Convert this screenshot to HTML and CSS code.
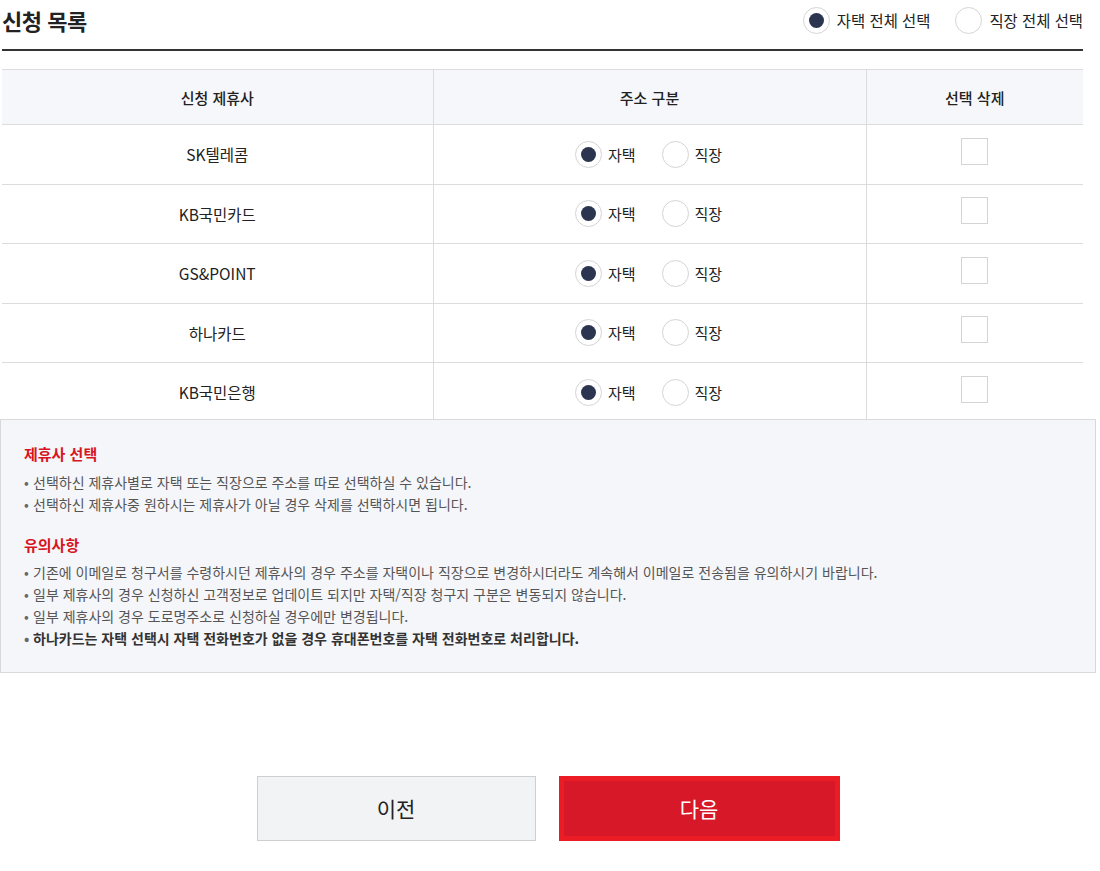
FILE: index.html
```html
<!DOCTYPE html>
<html lang="ko">
<head>
  <meta charset="UTF-8" />
  <title>신청 목록</title>
  <link rel="stylesheet" href="styles.css">
</head>
<body>
  <div class="wrap">
    <div class="list-head">
      <h2 class="title">신청 목록</h2>
      <div class="all-select">
        <label class="radio"><input type="radio" name="all" checked /><span>자택 전체 선택</span></label>
        <label class="radio"><input type="radio" name="all" /><span>직장 전체 선택</span></label>
      </div>
    </div>

    <table class="list">
      <colgroup>
        <col class="c1" />
        <col class="c2" />
        <col class="c3" />
      </colgroup>
      <thead>
        <tr>
          <th>신청 제휴사</th>
          <th>주소 구분</th>
          <th>선택 삭제</th>
        </tr>
      </thead>
      <tbody>
        <tr>
          <td>SK텔레콤</td>
          <td>
            <div class="addr">
              <label class="radio"><input type="radio" name="r1" checked /><span>자택</span></label>
              <label class="radio"><input type="radio" name="r1" /><span>직장</span></label>
            </div>
          </td>
          <td><input type="checkbox" class="check" /></td>
        </tr>
        <tr>
          <td>KB국민카드</td>
          <td>
            <div class="addr">
              <label class="radio"><input type="radio" name="r2" checked /><span>자택</span></label>
              <label class="radio"><input type="radio" name="r2" /><span>직장</span></label>
            </div>
          </td>
          <td><input type="checkbox" class="check" /></td>
        </tr>
        <tr>
          <td>GS&amp;POINT</td>
          <td>
            <div class="addr">
              <label class="radio"><input type="radio" name="r3" checked /><span>자택</span></label>
              <label class="radio"><input type="radio" name="r3" /><span>직장</span></label>
            </div>
          </td>
          <td><input type="checkbox" class="check" /></td>
        </tr>
        <tr>
          <td>하나카드</td>
          <td>
            <div class="addr">
              <label class="radio"><input type="radio" name="r4" checked /><span>자택</span></label>
              <label class="radio"><input type="radio" name="r4" /><span>직장</span></label>
            </div>
          </td>
          <td><input type="checkbox" class="check" /></td>
        </tr>
        <tr>
          <td>KB국민은행</td>
          <td>
            <div class="addr">
              <label class="radio"><input type="radio" name="r5" checked /><span>자택</span></label>
              <label class="radio"><input type="radio" name="r5" /><span>직장</span></label>
            </div>
          </td>
          <td><input type="checkbox" class="check" /></td>
        </tr>
      </tbody>
    </table>

    <div class="notice">
      <h3>제휴사 선택</h3>
      <ul>
        <li>선택하신 제휴사별로 자택 또는 직장으로 주소를 따로 선택하실 수 있습니다.</li>
        <li>선택하신 제휴사중 원하시는 제휴사가 아닐 경우 삭제를 선택하시면 됩니다.</li>
      </ul>
      <h3 class="second">유의사항</h3>
      <ul>
        <li>기존에 이메일로 청구서를 수령하시던 제휴사의 경우 주소를 자택이나 직장으로 변경하시더라도 계속해서 이메일로 전송됨을 유의하시기 바랍니다.</li>
        <li>일부 제휴사의 경우 신청하신 고객정보로 업데이트 되지만 자택/직장 청구지 구분은 변동되지 않습니다.</li>
        <li>일부 제휴사의 경우 도로명주소로 신청하실 경우에만 변경됩니다.</li>
        <li class="strong">하나카드는 자택 선택시 자택 전화번호가 없을 경우 휴대폰번호를 자택 전화번호로 처리합니다.</li>
      </ul>
    </div>

    <div class="btns">
      <button class="btn prev">이전</button>
      <button class="btn next">다음</button>
    </div>
  </div>
</body>
</html>
```

FILE: styles.css
```css
body {
  margin: 0;
  font-family: "Noto Sans CJK KR", "Noto Sans", sans-serif;
  color: #222;
  background: #fff;
}
.wrap {
  width: 1096px;
}
.list-head {
  display: flex;
  justify-content: space-between;
  align-items: center;
  height: 40px;
  padding: 0 0 9px;
  margin: 0 13px 0 2px;
  border-bottom: 2px solid #333;
}
.title {
  margin: 0;
  font-size: 22px;
  font-weight: 700;
  letter-spacing: -0.5px;
  color: #222;
}
.all-select {
  display: flex;
  gap: 25px;
}
.all-select .radio {
  font-size: 15.4px;
  gap: 7px;
}
.radio {
  display: inline-flex;
  align-items: center;
  gap: 6px;
  font-size: 15px;
  color: #222;
  cursor: pointer;
}
.radio input {
  appearance: none;
  -webkit-appearance: none;
  width: 27px;
  height: 27px;
  margin: 0;
  border: 1px solid #d4d4d4;
  border-radius: 50%;
  background: #fff;
  box-sizing: border-box;
  display: grid;
  place-items: center;
}
.radio input:checked::after {
  content: "";
  width: 15px;
  height: 15px;
  border-radius: 50%;
  background: #2c3550;
}
.list {
  width: 1081px;
  margin: 18px 0 0 2px;
  border-collapse: collapse;
  table-layout: fixed;
  border-top: 1px solid #dcdcdc;
}
.c1 { width: 431px; }
.c2 { width: 433px; }
.c3 { width: 217px; }
.list th {
  height: 54px;
  padding: 0;
  background: #f6f7fa;
  font-size: 15px;
  font-weight: 500;
  color: #222;
  border-bottom: 1px solid #dcdcdc;
  border-left: 1px solid #dcdcdc;
}
.list td {
  height: 58.5px;
  padding: 0;
  text-align: center;
  font-size: 15.5px;
  border-bottom: 1px solid #dcdcdc;
  border-left: 1px solid #dcdcdc;
}
.list th:first-child,
.list td:first-child {
  border-left: 0;
}
.addr {
  display: flex;
  justify-content: center;
  align-items: center;
  gap: 26px;
  padding-right: 2px;
}
.check {
  appearance: none;
  -webkit-appearance: none;
  display: block;
  width: 27px;
  height: 27px;
  margin: -6px auto 0;
  border: 1px solid #d4d4d4;
  background: #fff;
}
.notice {
  position: relative;
  margin-top: -4px;
  padding: 23px 23px 23px;
  border: 1px solid #d9d9d9;
  background: #f5f6fa;
}
.notice h3 {
  margin: 0 0 6px;
  font-size: 15px;
  line-height: 22px;
  font-weight: 700;
  color: #d7141f;
}
.notice h3.second {
  margin-top: 19px;
  margin-bottom: 5px;
}
.notice ul {
  margin: 0;
  padding: 0;
  list-style: none;
}
.notice li {
  font-size: 14px;
  line-height: 22px;
  color: #555;
}
.notice li::before {
  content: "•";
  display: inline-block;
  width: 9px;
  color: #666;
}
.notice li.strong {
  font-weight: 700;
  color: #333;
}
.btns {
  display: flex;
  justify-content: center;
  gap: 23px;
  margin-top: 103px;
}
.btn {
  height: 65px;
  font-family: inherit;
  font-size: 21px;
  cursor: pointer;
}
.prev {
  width: 279px;
  background: #f2f3f5;
  border: 1px solid #cfcfcf;
  color: #222;
}
.next {
  width: 281px;
  background: #d71828;
  border: 5px solid #ec1c24;
  color: #fff;
}
```
